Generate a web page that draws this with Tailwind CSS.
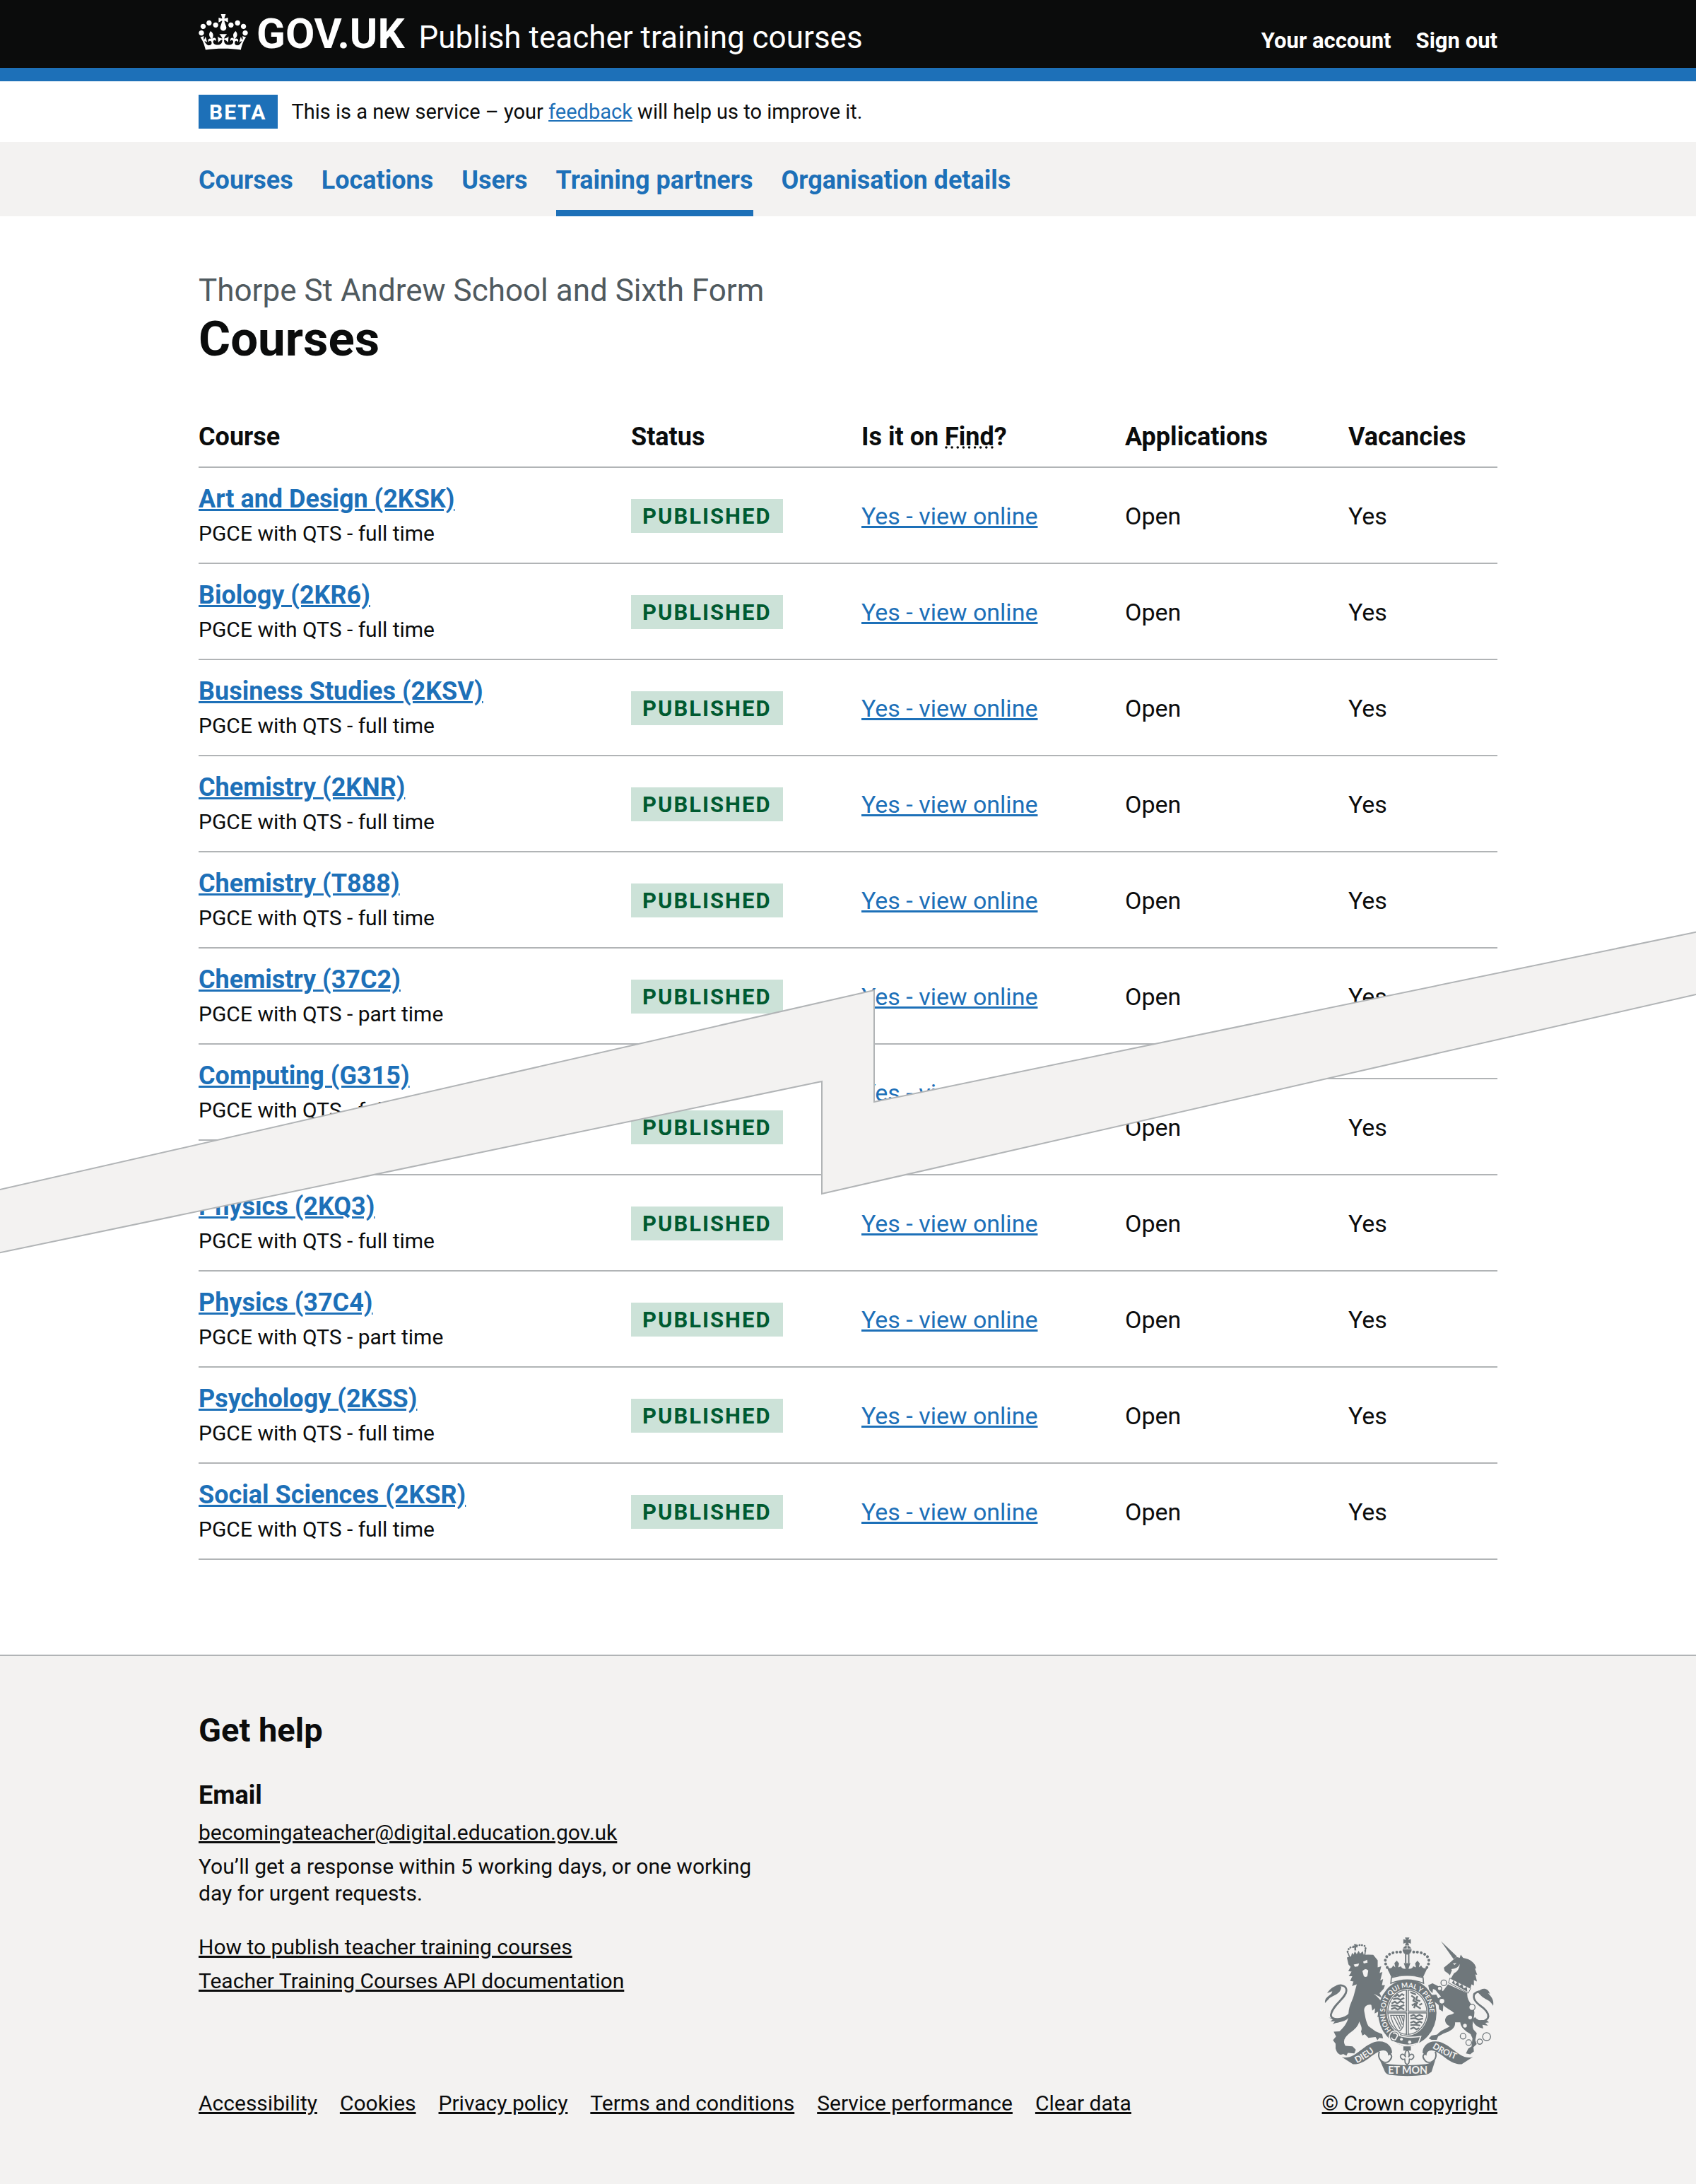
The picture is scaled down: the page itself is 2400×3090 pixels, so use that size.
<!DOCTYPE html>
<html lang="en">
<head>
<meta charset="utf-8">
<meta name="viewport" content="width=device-width, initial-scale=1">
<title>Courses – Publish teacher training courses</title>
<script src="https://cdn.jsdelivr.net/npm/@tailwindcss/browser@4"></script>
</head>
<body class="bg-white text-[#0b0c0c] font-[Roboto,Arial,sans-serif] text-[34px] leading-[48px]">

<header class="bg-[#0b0c0c] text-white border-b-[19px] border-[#1d70b8]">
  <div class="mx-auto w-full max-w-[1838px] flex items-baseline justify-between">
    <div class="flex items-baseline">
      <a href="#" class="flex items-baseline font-bold text-[60px] leading-[96px]" aria-label="GOV.UK">
        <svg viewBox="0 0 132 97" class="w-[70px] h-[51px] mr-3 translate-y-[3px]" fill="currentColor" aria-hidden="true"><path fill-rule="evenodd" d="M25 30.2c3.5 1.5 7.7-.2 9.1-3.7 1.5-3.6-.2-7.8-3.9-9.2-3.6-1.4-7.6.3-9.1 3.9-1.4 3.5.3 7.5 3.9 9zM9 39.500c3.600 1.500 7.800-.2 9.200-3.700 1.500-3.600-.2-7.800-3.900-9.100-3.600-1.500-7.600.2-9.100 3.800-1.400 3.500.3 7.500 3.800 9zM4.400 57.200c3.500 1.500 7.700-.2 9.100-3.800 1.500-3.600-.2-7.700-3.900-9.100-3.500-1.500-7.600.3-9.100 3.800-1.400 3.500.3 7.600 3.900 9.100zm38.300-21.400c3.500 1.500 7.700-.2 9.100-3.800 1.500-3.600-.2-7.700-3.900-9.100-3.600-1.500-7.600.3-9.100 3.800-1.300 3.600.4 7.700 3.900 9.100zm64.400-5.600c-3.600 1.500-7.800-.2-9.100-3.700-1.500-3.600.2-7.800 3.800-9.200 3.600-1.400 7.700.3 9.200 3.900 1.300 3.500-.4 7.500-3.900 9zm15.900 9.300c-3.600 1.500-7.700-.2-9.100-3.700-1.500-3.600.2-7.800 3.700-9.100 3.600-1.500 7.700.2 9.200 3.800 1.500 3.500-.3 7.500-3.800 9zm4.700 17.700c-3.600 1.500-7.800-.2-9.200-3.800-1.500-3.600.2-7.700 3.900-9.100 3.600-1.500 7.700.3 9.200 3.800 1.300 3.500-.4 7.600-3.900 9.100zM89.300 35.800c-3.600 1.500-7.800-.2-9.200-3.800-1.400-3.600.2-7.700 3.900-9.100 3.600-1.500 7.700.3 9.200 3.800 1.400 3.600-.3 7.700-3.900 9.100zM69.700 17.700l8.900 4.700V9.300l-8.900 2.800c-.2-.3-.5-.6-.9-.9L72.400 0H59.600l3.500 11.200c-.3.3-.6.5-.9.9l-8.800-2.800v13.100l8.800-4.700c.3.3.6.7.9.9l-5 15.400v.1c-.2.8-.4 1.600-.4 2.400 0 4.100 3.100 7.500 7 8.100h.2c.3 0 .7.1 1 .1.4 0 .7 0 1-.1h.2c4-.6 7.100-4.100 7.100-8.100 0-.8-.1-1.700-.4-2.400V34l-5.100-15.400c.4-.2.7-.6 1-.9zM66 92.800c16.900 0 32.800 1.100 47.100 3.200 4-16.900 8.900-26.700 14-33.500l-9.600-3.400c1 4.900 1.100 7.200 0 10.200-1.500-1.400-3-4.300-4.200-8.700L108.600 76c2.800-2 5-3.200 7.500-3.300-4.400 9.400-10 11.900-13.600 11.200-4.300-.8-6.300-4.600-5.600-7.900 1-4.700 5.700-5.900 8-.5 4.300-8.700-3-11.400-7.600-8.800 7.100-7.200 7.900-13.500 2.100-21.100-8 6.100-8.100 12.300-4.500 20.800-4.700-5.400-12.100-2.500-9.500 6.200 3.400-5.200 7.900-2 7.200 3.100-.6 4.300-6.400 7.800-13.500 7.200-10.300-.9-10.900-8-11.200-13.800 2.500-.5 7.100 1.800 11 7.300L80.200 60c-4.100 4.400-8 5.300-12.300 5.400 1.400-4.400 8-11.600 8-11.600H55.500s6.400 7.200 7.900 11.600c-4.200-.1-8-1-12.300-5.400l1.400 16.400c3.900-5.500 8.500-7.700 10.900-7.300-.3 5.800-.9 12.800-11.100 13.800-7.200.6-12.900-2.900-13.500-7.200-.7-5 3.800-8.300 7.100-3.100 2.700-8.700-4.600-11.600-9.400-6.200 3.700-8.500 3.600-14.700-4.600-20.800-5.800 7.600-5 13.900 2.200 21.100-4.700-2.600-11.900.1-7.700 8.800 2.300-5.500 7.100-4.200 8.100.5.7 3.300-1.300 7.100-5.700 7.900-3.500.7-9-1.800-13.500-11.200 2.500.1 4.700 1.300 7.500 3.300l-4.700-15.400c-1.200 4.400-2.700 7.200-4.300 8.700-1.100-3-.9-5.300 0-10.200l-9.500 3.400c5 6.900 9.900 16.700 14 33.500 14.800-2.100 30.800-3.200 47.700-3.200z"/></svg>
        <span>GOV.UK</span>
      </a>
      <a href="#" class="ml-[20px] text-[44px]">Publish teacher training courses</a>
    </div>
    <nav class="flex gap-[35px] text-[31px] font-bold" aria-label="Account">
      <a href="#">Your account</a>
      <a href="#">Sign out</a>
    </nav>
  </div>
</header>

<div class="mx-auto w-full max-w-[1838px] flex items-center py-[19px] text-[29px]">
  <strong class="bg-[#1d70b8] text-white h-12 px-[15px] tracking-[2px] text-[30px] leading-[50px]">BETA</strong>
  <p class="ml-5">This is a new service – your <a href="#" class="text-[#1d70b8] underline">feedback</a> will help us to improve it.</p>
</div>

<nav class="bg-[#f3f2f1]" aria-label="Organisation">
  <div class="mx-auto w-full max-w-[1838px] flex gap-10 text-[36px] font-bold text-[#1d70b8]">
    <a href="#" class="pt-[30px] pb-[18px] border-b-[9px] border-transparent">Courses</a>
    <a href="#" class="pt-[30px] pb-[18px] border-b-[9px] border-transparent">Locations</a>
    <a href="#" class="pt-[30px] pb-[18px] border-b-[9px] border-transparent">Users</a>
    <a href="#" aria-current="page" class="pt-[30px] pb-[18px] border-b-[9px] border-[#1d70b8]">Training partners</a>
    <a href="#" class="pt-[30px] pb-[18px] border-b-[9px] border-transparent">Organisation details</a>
  </div>
</nav>

<main class="pt-[76px] pb-[134px]">
  <h1 class="mx-auto w-full max-w-[1838px] mb-[54px]">
    <span class="block text-[44px] leading-[58px] text-[#505a5f]">Thorpe St Andrew School and Sixth Form</span>
    <span class="block text-[69px] leading-[80px] font-bold">Courses</span>
  </h1>

  <div class="relative">
    <!-- The list up to the tear -->
    <div class="[clip-path:polygon(0_0,100%_0,100%_745px,51.54%_985px,51.54%_827px,0_1109px)]">
      <div class="mx-auto w-full max-w-[1838px]">
        <table class="w-full table-fixed border-separate border-spacing-0 text-left">
          <colgroup><col><col class="w-[326px]"><col class="w-[373px]"><col class="w-[316px]"><col class="w-[211px]"></colgroup>
          <thead class="text-[36px]">
            <tr class="h-[88px]">
              <th scope="col" class="pt-[2px] border-b-2 border-[#b1b4b6]">Course</th>
              <th scope="col" class="pt-[2px] border-b-2 border-[#b1b4b6]">Status</th>
              <th scope="col" class="pt-[2px] border-b-2 border-[#b1b4b6]">Is it on <abbr title="Find postgraduate teacher training" class="underline decoration-dotted">Find</abbr>?</th>
              <th scope="col" class="pt-[2px] border-b-2 border-[#b1b4b6]">Applications</th>
              <th scope="col" class="pt-[2px] border-b-2 border-[#b1b4b6]">Vacancies</th>
            </tr>
          </thead>
          <tbody id="first-courses"></tbody>
        </table>
      </div>
    </div>

    <!-- The list from the tear on -->
    <div class="-mt-[89px] [clip-path:polygon(0_247px,48.46%_5px,48.46%_164px,100%_-118px,100%_100%,0_100%)]">
      <div class="mx-auto w-full max-w-[1838px]">
        <table class="w-full table-fixed border-separate border-spacing-0 text-left border-t-2 border-[#b1b4b6]">
          <colgroup><col><col class="w-[326px]"><col class="w-[373px]"><col class="w-[316px]"><col class="w-[211px]"></colgroup>
          <tbody id="last-courses"></tbody>
        </table>
      </div>
    </div>

    <!-- The torn strip over both lists -->
    <svg class="absolute left-0 top-[740px] w-full h-[464px]" viewBox="0 0 2400 464" preserveAspectRatio="none" aria-hidden="true">
      <path d="M-4 370 L1237 87 V245 L2404 4 V92 L1163 375 V216 L-4 459 Z" fill="#f3f2f1" stroke="#b1b4b6" stroke-width="2" vector-effect="non-scaling-stroke"/>
    </svg>
  </div>
</main>

<footer class="bg-[#f3f2f1] border-t-2 border-[#b1b4b6] pt-[76px] pb-[95px] text-[30px] leading-[38px]">
  <div class="mx-auto w-full max-w-[1838px] flex items-end justify-between">
    <div>
      <h2 class="text-[47px] leading-[58px] font-bold">Get help</h2>
      <h3 class="mt-[39px] text-[36px] leading-[48px] font-bold">Email</h3>
      <ul class="mt-[10px] flex flex-col gap-[10px]">
        <li><a href="#" class="underline">becomingateacher@digital.education.gov.uk</a></li>
        <li class="max-w-[790px]">You’ll get a response within 5 working days, or one working day for urgent requests.</li>
      </ul>
      <ul class="mt-[38px] flex flex-col gap-[10px]">
        <li><a href="#" class="underline">How to publish teacher training courses</a></li>
        <li><a href="#" class="underline">Teacher Training Courses API documentation</a></li>
      </ul>
      <ul class="mt-[135px] flex gap-8">
        <li><a href="#" class="underline">Accessibility</a></li>
        <li><a href="#" class="underline">Cookies</a></li>
        <li><a href="#" class="underline">Privacy policy</a></li>
        <li><a href="#" class="underline">Terms and conditions</a></li>
        <li><a href="#" class="underline">Service performance</a></li>
        <li><a href="#" class="underline">Clear data</a></li>
      </ul>
    </div>
    <a href="#" class="flex flex-col items-center gap-[19px] underline">
      <svg viewBox="100 60 724 594" class="w-[241px] h-[198px]" fill="#6f777b" stroke="none" aria-hidden="true">
        <defs>
          <path id="garter" d="M385 458 A95 107 0 1 1 521 458"/>
          <path id="dieu" d="M238 598 Q284 576 340 528"/>
          <path id="droit" d="M558 532 Q620 572 700 596"/>
        </defs>
        <!-- lion's tail -->
        <path d="M208 388 C185 412 128 420 128 392 C134 350 192 322 194 290 C195 266 168 262 150 272" fill="none" stroke="#6f777b" stroke-width="8"/>
        <path d="M103 342 C101 312 130 314 134 292 L112 300 C128 276 150 262 172 272 C172 306 134 308 120 324 Z"/>
        <path d="M118 403 Q145 416 180 402 L208 394 C198 424 165 420 135 432 L145 420 L126 420 L136 412 Z"/>
        <!-- lion -->
        <path d="M196 148 L203 178 L212 188 L202 206 L216 208 L204 228 L219 228 L210 248 L224 250 L218 270 L238 262 L228 300 C222 330 205 350 203 385 C206 412 190 440 165 462 L140 464 L150 484 L137 500 L148 515 L148 535 C155 560 170 566 180 558 L194 566 L200 554 L228 556 L234 540 L220 526 L190 524 C178 506 184 490 205 472 C230 454 246 438 248 420 C258 440 262 452 256 462 L262 480 L272 474 L288 490 L318 486 L326 500 L334 490 L350 492 L346 474 L318 462 L288 440 C278 425 274 400 270 378 C266 356 285 345 300 350 L304 374 L316 364 L314 386 L330 378 L326 402 L345 396 L352 408 L368 402 C364 360 345 330 310 302 L345 320 L335 300 L352 282 L358 266 L345 266 L350 240 L338 246 L347 210 L335 214 L342 186 L327 190 L327 160 L308 137 Q250 134 196 148 Z"/>
        <path d="M225 178 L248 174 L244 186 L230 188 Z M265 166 L282 158 L284 170 L268 174 Z M262 206 Q275 190 287 204 L283 228 Q275 234 268 228 Z" fill="#f3f2f1"/>
        <path d="M209 150 L198 122 M272 140 L276 108 M211 148 Q240 138 272 138" fill="none" stroke="#6f777b" stroke-width="5"/>
        <path d="M199 124 Q204 102 224 104 Q232 112 234 100 Q248 92 270 98 Q278 104 274 120" fill="none" stroke="#6f777b" stroke-width="8" stroke-linecap="round" stroke-dasharray="1 10"/>
        <path d="M226 92 h12 l-3 6 6 -2 v10 l-7 -2 2 14 h-8 l0 -14 -6 3 v-10 l6 2 Z M212 150 L218 128 224 136 230 122 238 134 246 120 252 132 264 122 268 140 Z"/>
        <!-- central crown -->
        <path d="M443 63 H462 L457 74 L468 70 V90 L457 85 L461 97 H443 L447 85 L436 90 V70 L447 74 Z"/>
        <circle cx="452" cy="117" r="19"/>
        <path d="M434 112 H470 M452 98 V112" stroke="#f3f2f1" stroke-width="3"/>
        <path d="M446 134 V172 M459 134 V172" stroke="#6f777b" stroke-width="6"/>
        <g fill="none" stroke="#6f777b" stroke-width="12" stroke-linecap="round">
          <path d="M378 203 C340 165 360 118 434 126" stroke-dasharray="0.1 16"/>
          <path d="M526 203 C564 165 544 118 470 126" stroke-dasharray="0.1 16"/>
        </g>
        <path d="M362 182 C375 200 388 196 392 182 L402 190 L398 172 L408 162 L418 174 L414 190 L426 186 Q430 198 446 196 L438 172 H466 L458 196 Q474 198 478 186 L490 190 L486 174 L496 162 L506 174 L502 190 L512 182 C518 196 530 200 542 184 L520 232 Q452 212 385 232 Z"/>
        <!-- garter and shield -->
        <ellipse cx="453" cy="383" rx="124" ry="140"/>
        <path d="M385 234 Q452 214 520 234 L522 258 Q452 230 383 258 Z" fill="#f3f2f1" stroke="#6f777b" stroke-width="5"/>
        <ellipse cx="453" cy="381" rx="88" ry="99" fill="#f3f2f1"/>
        <ellipse cx="453" cy="381" rx="83" ry="94" fill="none" stroke="#6f777b" stroke-width="4"/>
        <path d="M453 287 V476 M370 380 H536" stroke="#6f777b" stroke-width="12"/>
        <path d="M453 287 V476 M370 380 H536" stroke="#f3f2f1" stroke-width="3"/>
        <g fill="none" stroke="#6f777b" stroke-width="7" stroke-linejoin="round">
          <path d="M398 316 L412 306 418 314 430 304 440 310 M392 326 L410 322 424 328 440 320 M386 344 L400 336 410 344 424 334 440 342 M384 354 L404 352 420 358 440 350 M384 368 L400 362 412 370 426 362 440 370"/>
          <path d="M470 310 L484 320 478 332 496 340 488 352 510 366 M496 312 L490 328 508 334 M472 352 L486 344 482 364 M504 350 L516 344 M466 296 L490 306"/>
          <path d="M466 398 L480 392 490 400 504 392 520 400 M466 408 L486 406 500 412 520 408 M466 426 L480 420 492 428 506 420 516 426 M466 436 L486 434 508 438 M466 452 L480 446 492 454 504 448"/>
        </g>
        <path d="M382 394 H440 L436 440 Q420 470 410 456 Q390 430 382 394 Z M394 398 L422 452 M406 396 L428 446 M418 396 L432 434 M428 396 L436 420" fill="none" stroke="#6f777b" stroke-width="4"/>
        <text class="font-[Lato,sans-serif] font-bold text-[29px]" fill="#f3f2f1"><textPath href="#garter">HONI SOIT QUI MAL Y PENSE</textPath></text>
        <path d="M376 484 Q380 458 406 462 Q418 466 420 480 Q452 492 510 484 L500 512 Q450 532 392 506 Q380 506 376 484 Z" stroke="#f3f2f1" stroke-width="5"/>
        <path d="M392 470 Q408 466 412 480 L402 498 Q388 500 386 488" fill="none" stroke="#f3f2f1" stroke-width="5"/>
        <g fill="#f3f2f1"><circle cx="428" cy="496" r="6"/><circle cx="463" cy="508" r="7"/></g>
        <!-- unicorn -->
        <path d="M596 79 L664 144 L650 156 Z"/>
        <path d="M648 158 L662 146 L676 150 L680 136 L690 150 C722 156 742 172 746 196 L740 194 L750 222 L742 220 L749 250 L736 244 L736 268 L726 262 L720 284 L634 244 L652 214 Q656 200 664 194 L642 204 L634 224 L626 216 L612 206 L608 192 L630 174 Z"/>
        <path d="M646 174 L662 172 L654 180 Z M640 198 Q668 196 676 176 Q674 206 650 216 Z" fill="#f3f2f1"/>
        <path d="M634 236 L722 280 L712 300 L628 256 Z" fill="#f3f2f1" stroke="#6f777b" stroke-width="3"/>
        <path d="M642 256 L650 244 L656 262 L668 250 L674 270 L686 260 L692 280 L706 274 L708 294 Z"/>
        <path d="M626 262 L708 300 C704 340 740 350 738 384 C738 410 724 430 734 454 L748 470 L742 500 L748 516 L734 530 L736 548 L720 560 L702 556 L712 536 L726 526 L730 492 L722 474 C700 462 680 446 678 424 L656 424 C658 448 640 460 606 472 L584 484 L578 498 L556 498 L544 492 L556 480 L580 476 C592 458 616 452 634 440 C616 434 608 416 618 402 C626 388 642 394 652 384 C640 372 618 364 606 350 L604 378 L588 368 L586 350 L560 330 L552 308 L576 306 L584 322 L596 314 L572 286 L562 282 L560 300 L546 286 L542 266 L560 258 L584 270 L604 292 Z"/>
        <path d="M760 292 C722 300 732 330 762 352 C796 376 812 404 780 418 C764 424 744 416 738 404" fill="none" stroke="#6f777b" stroke-width="8"/>
        <path d="M752 296 C770 274 796 276 804 302 L796 300 C812 316 822 330 818 354 C806 328 782 326 770 314 Z M726 398 C744 424 770 410 792 416 L800 424 L784 426 L796 438 L772 434 L776 450 C750 446 730 430 726 398 Z"/>
        <g fill="#f3f2f1" stroke="#6f777b" stroke-width="4">
          <circle cx="608" cy="256" r="12"/><circle cx="590" cy="280" r="9"/><circle cx="600" cy="334" r="12"/><circle cx="728" cy="360" r="13"/><circle cx="720" cy="403" r="10"/><circle cx="698" cy="438" r="10"/><circle cx="690" cy="483" r="12"/><circle cx="714" cy="510" r="12"/><circle cx="761" cy="506" r="11"/><circle cx="790" cy="485" r="17"/>
        </g>
        <!-- motto scroll -->
        <path d="M174 571 C230 588 262 518 322 506 C362 498 390 526 388 554 L372 566 Q372 540 344 544 C300 556 276 604 222 602 Z"/>
        <path d="M732 571 C676 588 644 518 584 506 C544 498 516 526 518 554 L534 566 Q534 540 562 544 C606 556 630 604 684 602 Z"/>
        <path d="M334 548 C322 586 358 604 376 588 C390 574 390 560 372 556 M572 548 C584 586 548 604 530 588 C516 574 516 560 534 556" fill="none" stroke="#6f777b" stroke-width="6"/>
        <path d="M336 584 Q356 600 376 602 Q452 610 530 602 Q550 600 572 584 L556 634 Q544 644 530 647 Q452 657 376 647 Q362 642 358 634 Z"/>
        <g class="font-[Lato,sans-serif] font-bold" fill="#f3f2f1">
          <text class="text-[38px]"><textPath href="#dieu">DIEU</textPath></text>
          <text class="text-[36px]"><textPath href="#droit">DROIT</textPath></text>
          <text x="455" y="643" text-anchor="middle" class="text-[43px]">ET MON</text>
        </g>
        <path d="M436 526 H468 V544 H436 Z"/>
        <path d="M452 540 Q466 556 458 572 Q466 554 478 562 Q486 574 470 582 L462 580 L460 596 L452 604 L444 596 L442 580 L434 582 Q418 574 426 562 Q438 554 446 572 Q438 556 452 540 Z" fill="#f3f2f1" stroke="#6f777b" stroke-width="5"/>
      </svg>
      <span>© Crown copyright</span>
    </a>
  </div>
</footer>

<script>
  // Each row lists the cells that stay clear of the torn strip.
  const all = ["course", "status", "find", "open", "vacancies"];
  const row = ([name, mode, cells = all]) => {
    const show = (cell, html) => cells.includes(cell) ? html : "";
    return `
    <tr class="h-[136px]">
      <td class="align-top pt-5 border-b-2 border-[#b1b4b6]">${show("course", `
        <a href="#" class="block w-fit text-[36px] font-bold text-[#1d70b8] underline">${name}</a>
        <span class="block mt-[6px] text-[30px] leading-[38px]">PGCE with QTS - ${mode} time</span>`)}
      </td>
      <td class="pt-[2px] border-b-2 border-[#b1b4b6]">${show("status", `<strong class="block w-fit h-12 px-4 bg-[#cce2d8] text-[#005a30] text-[31px] leading-[49px] tracking-[2px]">PUBLISHED</strong>`)}</td>
      <td class="pt-[2px] border-b-2 border-[#b1b4b6]">${show("find", `<a href="#" class="text-[#1d70b8] underline">Yes - view online</a>`)}</td>
      <td class="pt-[2px] border-b-2 border-[#b1b4b6]">${show("open", "Open")}</td>
      <td class="pt-[2px] border-b-2 border-[#b1b4b6]">${show("vacancies", "Yes")}</td>
    </tr>`;
  };
  const first = [
    ["Art and Design (2KSK)", "full"], ["Biology (2KR6)", "full"], ["Business Studies (2KSV)", "full"],
    ["Chemistry (2KNR)", "full"], ["Chemistry (T888)", "full"], ["Chemistry (37C2)", "part"],
    ["Computing (G315)", "full", ["course", "find"]],
  ];
  const last = [
    ["", "", ["status", "open", "vacancies"]], ["Physics (2KQ3)", "full"], ["Physics (37C4)", "part"],
    ["Psychology (2KSS)", "full"], ["Social Sciences (2KSR)", "full"],
  ];
  document.getElementById("first-courses").innerHTML = first.map(row).join("");
  document.getElementById("last-courses").innerHTML = last.map(row).join("");
</script>
</body>
</html>
